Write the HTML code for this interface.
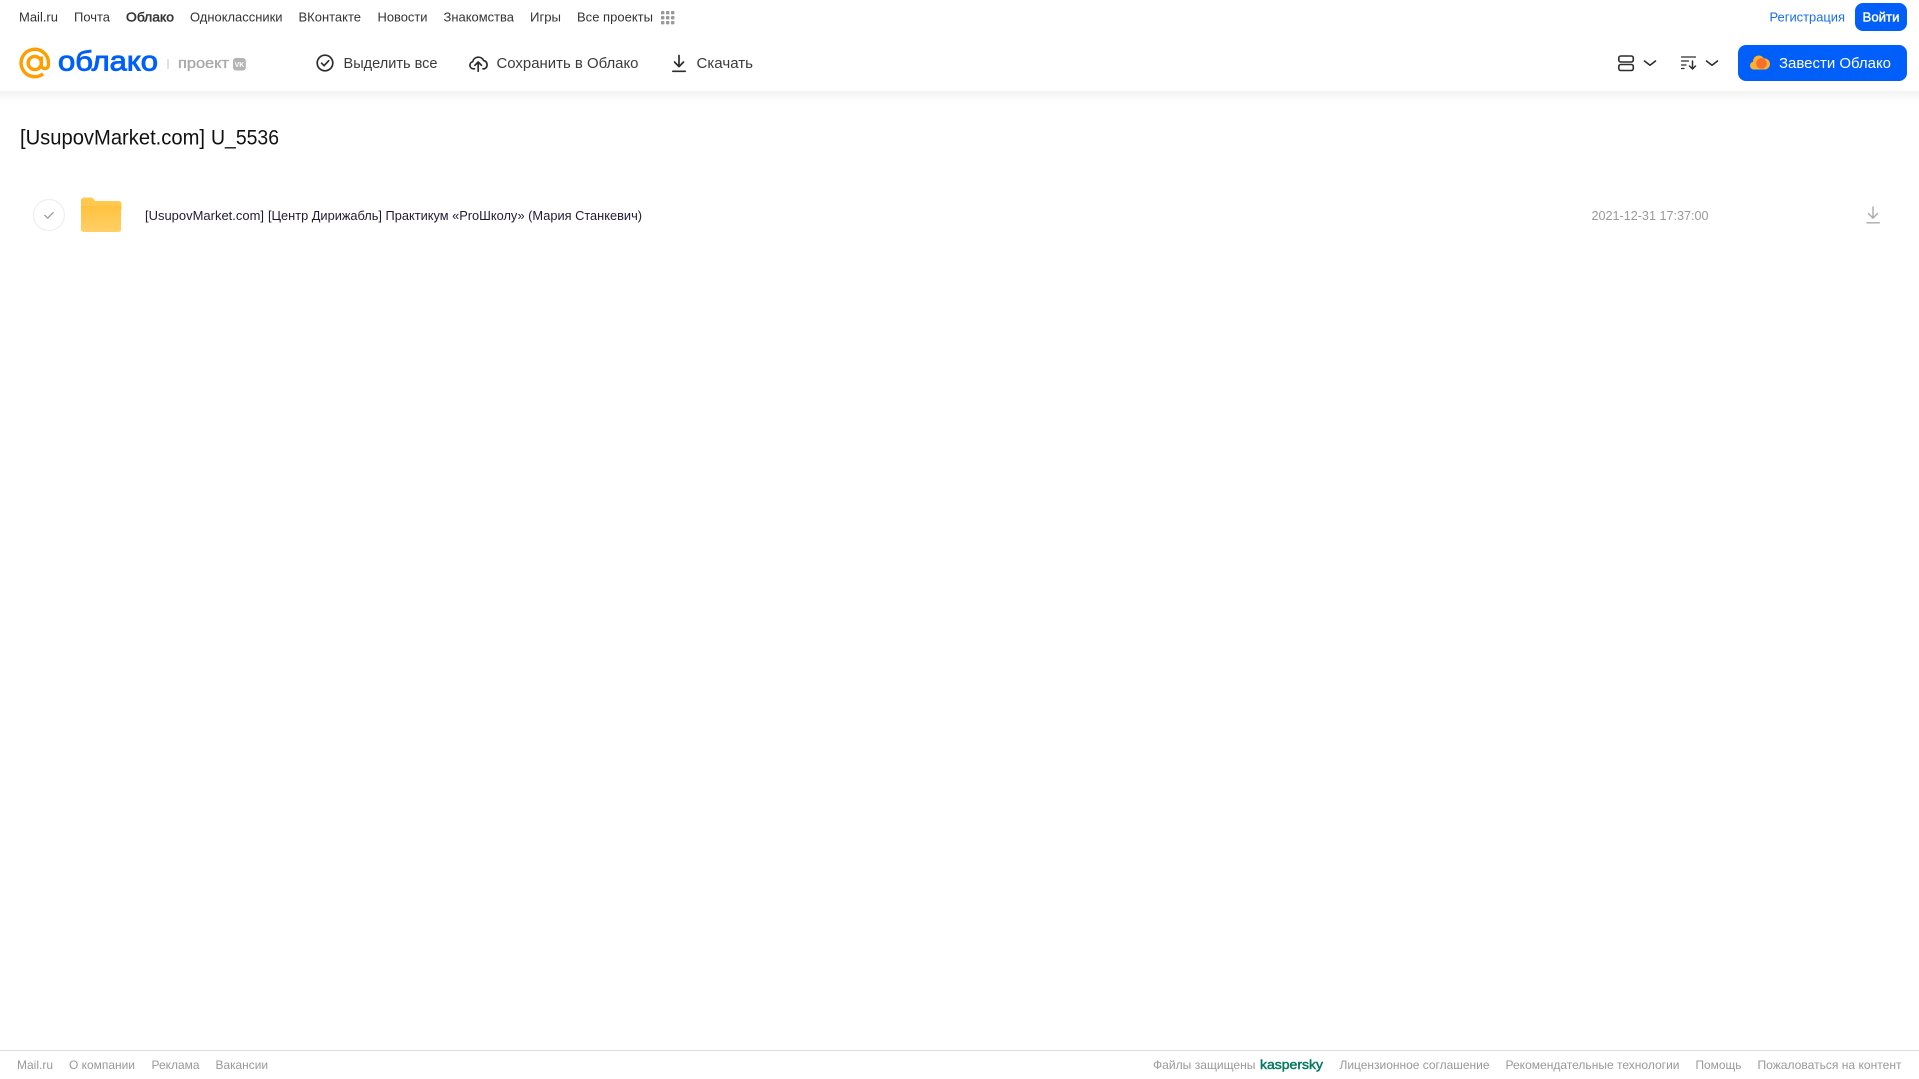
<!DOCTYPE html>
<html lang="ru">
<head>
<meta charset="utf-8">
<title>Облако</title>
<style>
html,body{margin:0;padding:0;background:#fff;width:1919px;height:1079px;overflow:hidden}
svg{display:block;position:absolute;left:0;top:0}
text{font-family:"Liberation Sans","Noto Sans CJK SC",sans-serif;white-space:pre}
</style>
</head>
<body>
<svg width="1919" height="1079" viewBox="0 0 1919 1079" xmlns="http://www.w3.org/2000/svg">
<defs>
<linearGradient id="sh" x1="0" y1="0" x2="0" y2="1"><stop offset="0" stop-color="#f3f3f3"/><stop offset="1" stop-color="#ffffff"/></linearGradient>
<linearGradient id="fd" x1="0" y1="0" x2="0" y2="1"><stop offset="0" stop-color="#ffc23f"/><stop offset="1" stop-color="#ffd067"/></linearGradient>
</defs>
<rect x="0" y="91" width="1919" height="11" fill="url(#sh)"/>

<!-- top nav -->
<g font-size="13" fill="#333">
<text x="19" y="21.5" textLength="39" lengthAdjust="spacingAndGlyphs">Mail.ru</text>
<text x="74" y="21.5" textLength="36" lengthAdjust="spacingAndGlyphs">Почта</text>
<text x="126" y="21.5" textLength="48" lengthAdjust="spacingAndGlyphs" stroke="#333" stroke-width=".45">Облако</text>
<text x="190" y="21.5" textLength="92.5" lengthAdjust="spacingAndGlyphs">Одноклассники</text>
<text x="298.5" y="21.5" textLength="62.5" lengthAdjust="spacingAndGlyphs">ВКонтакте</text>
<text x="377.5" y="21.5" textLength="50" lengthAdjust="spacingAndGlyphs">Новости</text>
<text x="443.5" y="21.5" textLength="70.5" lengthAdjust="spacingAndGlyphs">Знакомства</text>
<text x="530" y="21.5" textLength="31" lengthAdjust="spacingAndGlyphs">Игры</text>
<text x="577" y="21.5" textLength="76" lengthAdjust="spacingAndGlyphs">Все проекты</text>
</g>
<g fill="#999">
<rect x="661" y="11" width="3.4" height="3.4" rx=".8"/><rect x="666" y="11" width="3.4" height="3.4" rx=".8"/><rect x="671" y="11" width="3.4" height="3.4" rx=".8"/>
<rect x="661" y="16" width="3.4" height="3.4" rx=".8"/><rect x="666" y="16" width="3.4" height="3.4" rx=".8"/><rect x="671" y="16" width="3.4" height="3.4" rx=".8"/>
<rect x="661" y="21" width="3.4" height="3.4" rx=".8"/><rect x="666" y="21" width="3.4" height="3.4" rx=".8"/><rect x="671" y="21" width="3.4" height="3.4" rx=".8"/>
</g>

<!-- logo -->
<g fill="none" stroke="#ff9e00" stroke-width="3.4" transform="translate(-.7 0)">
<circle cx="35.5" cy="63" r="6.6"/>
<path d="M42.1 56.5V65a3.55 3.55 0 0 0 7.1 0V63a13.7 13.7 0 1 0-5.4 10.9"/>
</g>
<text x="58" y="70.5" font-size="28" fill="#005ff9" stroke="#005ff9" stroke-width=".9" textLength="100" lengthAdjust="spacingAndGlyphs">облако</text>
<rect x="167.5" y="59" width="1" height="10" fill="#c4c4c4"/>
<text x="178" y="68" font-size="15" fill="#a8a8a8" stroke="#a8a8a8" stroke-width=".35" textLength="51" lengthAdjust="spacingAndGlyphs">проект</text>
<rect x="233" y="58" width="12.8" height="12.5" rx="3" fill="#b4b4b4"/>
<text x="234.6" y="67" font-size="7.5" font-weight="700" fill="#fff" textLength="9.6" lengthAdjust="spacingAndGlyphs">VK</text>

<!-- actions -->
<g fill="none" stroke="#2c2d2e" stroke-width="1.7" stroke-linecap="round" stroke-linejoin="round">
<circle cx="325" cy="63" r="7.8"/>
<path d="M321.6 63.2l2.5 2.5 4.6-5"/>
<path d="M474.500 68.800h-1.200a3.600 3.600 0 0 1-.6-7.100a5.800 5.800 0 0 1 10.900-1.200a4.400 4.400 0 0 1 .9 8.300h-1.600"/>
<path d="M478.200 71.300v-9M474.900 65.300l3.300-3.300 3.300 3.300"/>
<path d="M679 55.500v11M674.500 62l4.500 4.600 4.500-4.600"/>
<path d="M672.800 71.300h12.400"/>
</g>
<g font-size="15" fill="#3a3b3c">
<text x="343.500" y="68" textLength="94" lengthAdjust="spacingAndGlyphs">Выделить все</text>
<text x="496.500" y="68" textLength="142" lengthAdjust="spacingAndGlyphs">Сохранить в Облако</text>
<text x="696.500" y="68" textLength="56.500" lengthAdjust="spacingAndGlyphs">Скачать</text>
</g>

<!-- right header -->
<text x="1769.500" y="21.500" font-size="13" fill="#1a6ee8" textLength="75.500" lengthAdjust="spacingAndGlyphs">Регистрация</text>
<rect x="1855" y="3" width="52" height="28" rx="8" fill="#005ff9"/>
<text x="1862.500" y="21.500" font-size="13" fill="#fff" stroke="#fff" stroke-width=".4" textLength="37" lengthAdjust="spacingAndGlyphs">Войти</text>

<g fill="none" stroke="#2c2d2e" stroke-width="1.600" stroke-linecap="round" stroke-linejoin="round">
<rect x="1618.800" y="56" width="14.500" height="6" rx="2"/>
<rect x="1618.800" y="64.500" width="14.500" height="6" rx="2"/>
<path d="M1644.500 61l5.500 4.300 5.500-4.300"/>
<path d="M1706.500 61l5.500 4.300 5.500-4.300"/>
</g>
<g fill="none" stroke="#2c2d2e" stroke-linecap="round" stroke-linejoin="round">
<path stroke-width="1.200" d="M1681.500 57h14M1681.500 61h7M1681.500 65h4.500M1681.500 68.500h2.500"/>
<path stroke-width="1.500" d="M1692.500 61v8M1689.500 66l3 3 3-3"/>
</g>

<rect x="1738" y="45" width="169" height="36" rx="8" fill="#005ff9"/>
<g transform="translate(-1 -.5)">
<path fill="#ffb02e" d="M1755 70a3.900 3.900 0 0 1-1-7.700a5.800 5.800 0 0 1 10.800-3.400a5.400 5.400 0 0 1 1.200 11.100z"/>
<circle cx="1762.500" cy="64" r="5.300" fill="#f5702a"/>
</g>
<text x="1779" y="68" font-size="15" fill="#fff" textLength="112" lengthAdjust="spacingAndGlyphs">Завести Облако</text>

<!-- title -->
<text x="20" y="144.500" font-size="21" fill="#111" textLength="185" lengthAdjust="spacingAndGlyphs">[UsupovMarket.com]</text>
<text x="211" y="144.500" font-size="21" fill="#111" textLength="68" lengthAdjust="spacingAndGlyphs">U_5536</text>

<!-- row -->
<circle cx="49" cy="215" r="15.500" fill="#fff" stroke="#efefef" stroke-width="1.200"/>
<path d="M44.800 215.300l2.900 2.900 5.400-5.600" fill="none" stroke="#999" stroke-width="1.300" stroke-linecap="round" stroke-linejoin="round"/>
<path fill="#ffc84f" d="M81 200.500a3 3 0 0 1 3-3h6.500a4 4 0 0 1 3 1.300l1.500 2.200h23.500a3 3 0 0 1 3 3v6H81z"/>
<path fill="url(#fd)" d="M81 206h40v23.500a2.500 2.500 0 0 1-2.500 2.500h-35a2.500 2.500 0 0 1-2.500-2.500z"/>
<text x="145" y="220" font-size="13" fill="#221a33" textLength="119" lengthAdjust="spacingAndGlyphs">[UsupovMarket.com]</text>
<text x="268" y="220" font-size="13" fill="#221a33" textLength="374" lengthAdjust="spacingAndGlyphs">[Центр Дирижабль] Практикум «ProШколу» (Мария Станкевич)</text>
<text x="1591.500" y="220" font-size="13" fill="#999" textLength="117" lengthAdjust="spacingAndGlyphs">2021-12-31 17:37:00</text>
<g fill="none" stroke="#aaa" stroke-width="1.400" stroke-linecap="round" stroke-linejoin="round">
<path d="M1873 207v11M1868.500 213.500l4.500 4.600 4.500-4.600"/>
<path d="M1867 222.800h12.300"/>
</g>

<!-- footer -->
<rect x="0" y="1050" width="1919" height="1" fill="#dcdcdc"/>
<g font-size="12" fill="#999">
<text x="17" y="1069" textLength="36" lengthAdjust="spacingAndGlyphs">Mail.ru</text>
<text x="69" y="1069" textLength="66" lengthAdjust="spacingAndGlyphs">О компании</text>
<text x="151.500" y="1069" textLength="48" lengthAdjust="spacingAndGlyphs">Реклама</text>
<text x="215.500" y="1069" textLength="52.500" lengthAdjust="spacingAndGlyphs">Вакансии</text>
<text x="1153" y="1069" textLength="102.500" lengthAdjust="spacingAndGlyphs">Файлы защищены</text>
<text x="1260" y="1069" font-size="13" fill="#00795f" stroke="#00795f" stroke-width=".45" textLength="63" lengthAdjust="spacingAndGlyphs">kaspersky</text>
<text x="1339.500" y="1069" textLength="150" lengthAdjust="spacingAndGlyphs">Лицензионное соглашение</text>
<text x="1505.500" y="1069" textLength="174" lengthAdjust="spacingAndGlyphs">Рекомендательные технологии</text>
<text x="1695.500" y="1069" textLength="46" lengthAdjust="spacingAndGlyphs">Помощь</text>
<text x="1757.500" y="1069" textLength="144" lengthAdjust="spacingAndGlyphs">Пожаловаться на контент</text>
</g>
</svg>
</body>
</html>
